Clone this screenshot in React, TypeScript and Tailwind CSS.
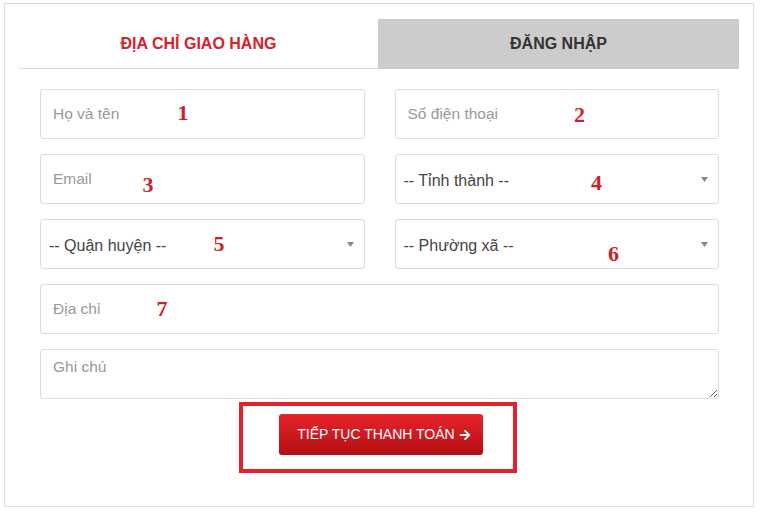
import { FaArrowRight } from 'react-icons/fa';

type Field = {
  placeholder: string;
  kind: 'input' | 'select';
  num?: string;
  numClass?: string;
};

const fields: Field[] = [
  { placeholder: 'Họ và tên', kind: 'input', num: '1', numClass: 'left-[143px] top-[24px]' },
  { placeholder: 'Số điện thoại', kind: 'input', num: '2', numClass: 'left-[185px] top-[26px]' },
  { placeholder: 'Email', kind: 'input', num: '3', numClass: 'left-[108px] top-[31px]' },
  { placeholder: '-- Tỉnh thành --', kind: 'select', num: '4', numClass: 'left-[202px] top-[29px]' },
  { placeholder: '-- Quận huyện --', kind: 'select', num: '5', numClass: 'left-[179px] top-[25px]' },
  { placeholder: '-- Phường xã --', kind: 'select', num: '6', numClass: 'left-[219px] top-[35px]' },
];

function Num({ value, className }: { value: string; className: string }) {
  return (
    <span
      className={`pointer-events-none absolute -translate-x-1/2 -translate-y-1/2 font-['Liberation_Serif',serif] text-[22px] leading-none font-bold text-[#d01f2b] ${className}`}
    >
      {value}
    </span>
  );
}

function FormField({ field }: { field: Field }) {
  return (
    <div className="relative h-[50px]">
      {field.kind === 'input' ? (
        <input
          type="text"
          placeholder={field.placeholder}
          className="h-full w-full rounded-[3px] border border-[#dcdcdc] bg-white px-[12px] text-[15.5px] text-[#444] outline-none placeholder:text-[#999]"
        />
      ) : (
        <>
          <select className="h-full w-full appearance-none rounded-[3px] border border-[#dcdcdc] bg-white pl-[8px] pt-[4px] text-[16px] text-[#444] outline-none">
            <option>{field.placeholder}</option>
          </select>
          <svg
            className="pointer-events-none absolute right-[11px] top-[23px]"
            width="7"
            height="5"
            viewBox="0 0 7 5"
          >
            <path d="M0 0h7L3.5 5z" fill="#888" />
          </svg>
        </>
      )}
      {field.num && <Num value={field.num} className={field.numClass ?? ''} />}
    </div>
  );
}

export default function App() {
  return (
    <div className="min-h-[512px] bg-white pl-[4px] pt-[3px] font-['Liberation_Sans',Arial,sans-serif]">
      <div className="h-[504px] w-[750px] border border-[#dddddd] bg-white px-[14px] pt-[15px]">
        {/* Tabs */}
        <div className="flex h-[50px]">
          <div className="flex w-[359px] items-center justify-center border-b border-[#dddddd] text-[16px] font-bold text-[#d7222b]">
            ĐỊA CHỈ GIAO HÀNG
          </div>
          <div className="flex flex-1 items-center justify-center bg-[#cccccc] text-[16px] font-bold text-[#333]">
            ĐĂNG NHẬP
          </div>
        </div>

        {/* Form */}
        <div className="pl-[21px] pr-[20px] pt-[20px]">
          <div className="grid grid-cols-2 gap-x-[30px] gap-y-[15px]">
            {fields.map((f) => (
              <FormField key={f.placeholder} field={f} />
            ))}
            <div className="relative col-span-2 h-[50px]">
              <input
                type="text"
                placeholder="Địa chỉ"
                className="h-full w-full rounded-[3px] border border-[#dcdcdc] bg-white px-[12px] text-[15.5px] text-[#444] outline-none placeholder:text-[#999]"
              />
              <Num value="7" className="left-[122px] top-[25px]" />
            </div>
            <textarea
              placeholder="Ghi chú"
              className="col-span-2 block h-[50px] w-full resize-y rounded-[3px] border border-[#dcdcdc] bg-white px-[12px] pt-[6px] text-[15.5px] leading-[22px] text-[#444] outline-none placeholder:text-[#999]"
            />
          </div>

          {/* Submit */}
          <div className="mt-[3px] flex justify-center">
            <div className="ml-[-3px] h-[71px] w-[278px] border-4 border-[#e3212a] pl-[36px] pt-[8px]">
              <button className="flex h-[41px] w-[204px] items-center justify-center gap-[4px] rounded-[3px] bg-gradient-to-b from-[#e8242c] to-[#b30f12] pl-[6px] text-[14px] text-white">
                TIẾP TỤC THANH TOÁN
                <FaArrowRight className="h-[12px] w-[12px]" />
              </button>
            </div>
          </div>
        </div>
      </div>
    </div>
  );
}
